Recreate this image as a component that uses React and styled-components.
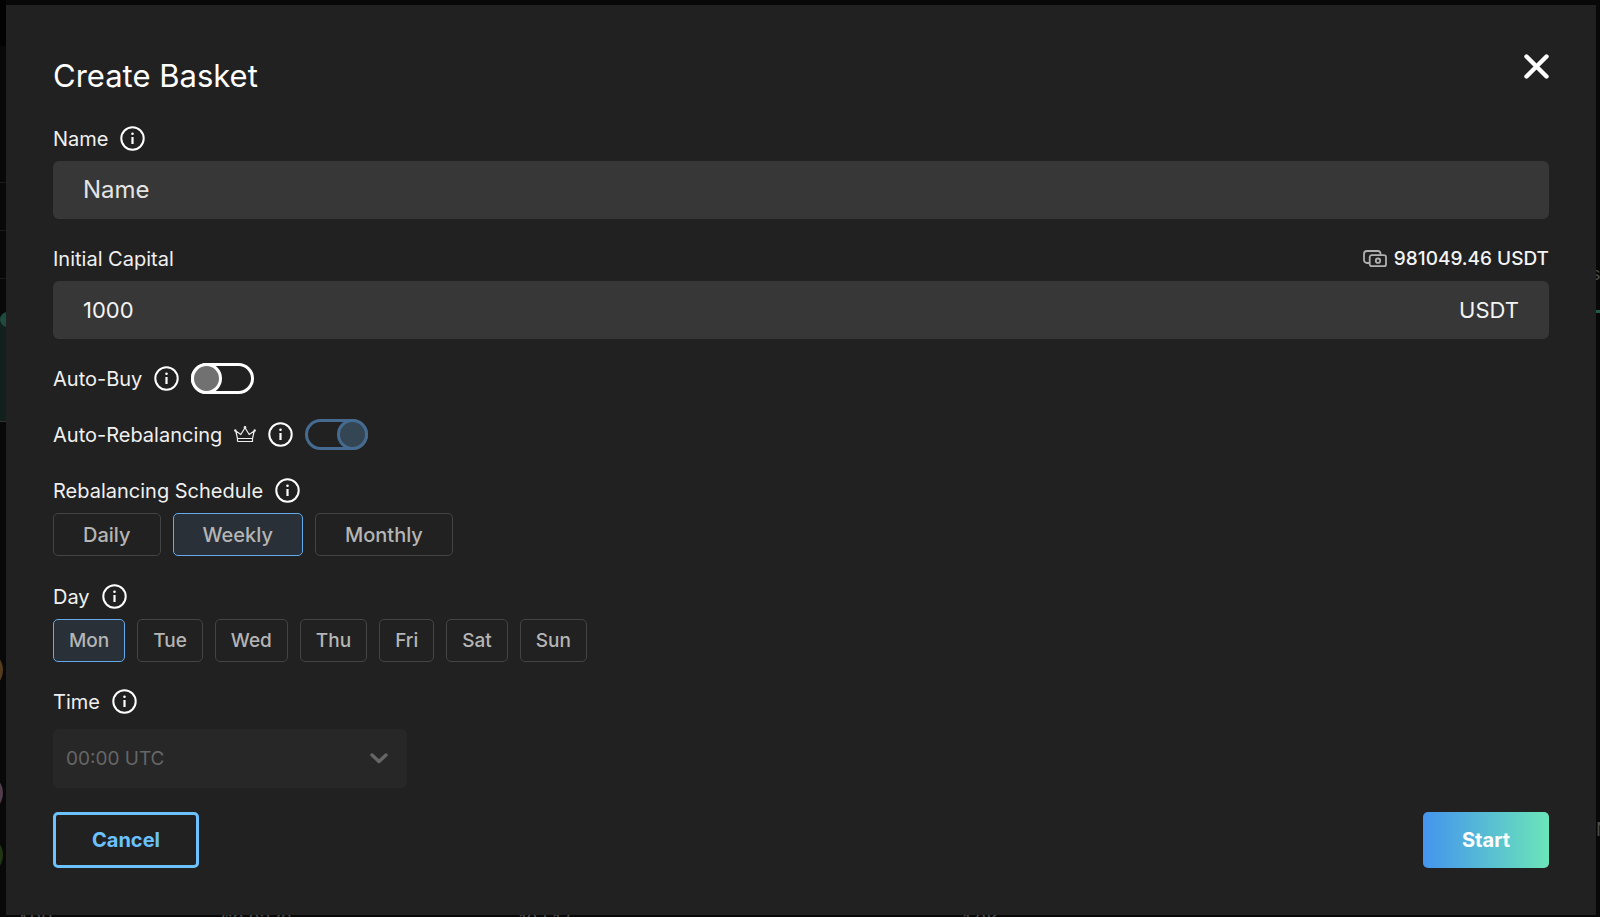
import React from "react";
import styled, { createGlobalStyle, css } from "styled-components";

const Global = createGlobalStyle`
  *, *::before { box-sizing: border-box; }
  body { margin: 0; background: #080808; color: #f4f4f4; font: 400 20px/30px Inter, "Open Sans", sans-serif; }
  button, input, select { font: inherit; color: inherit; }
  svg { display: block; flex: none; }
`;

const Page = styled.div`
  position: relative;
  min-height: 100vh;
  padding: 5px 4px 2px 6px;
  overflow: hidden;
`;

const Backdrop = styled.div`
  position: absolute;
  inset: 0;
  overflow: hidden;
`;

const Shape = styled.i`
  position: absolute;
  left: ${(p) => p.$x};
  top: ${(p) => p.$y}px;
  width: ${(p) => p.$w}px;
  height: ${(p) => p.$h}px;
  border-radius: ${(p) => p.$r || 0}px;
  background: ${(p) => p.$c};
`;

const Ghost = styled.span`
  position: absolute;
  left: ${(p) => p.$x};
  top: ${(p) => p.$y}px;
  color: #4c4c4c;
  font-size: 18px;
  line-height: 20px;
  white-space: nowrap;
`;

const Dialog = styled.form`
  position: relative;
  display: flex;
  flex-direction: column;
  min-height: calc(100vh - 7px);
  padding: 47px 47px 24px;
  background: #212121;
`;

const Header = styled.header`
  display: flex;
  justify-content: space-between;
  align-items: flex-start;
  margin-bottom: 26px;
`;

const Title = styled.h1`
  margin: 3px 0 0;
  font-size: 31px;
  line-height: 42px;
  font-weight: 400;
  color: #fff;
`;

const CloseButton = styled.button`
  padding: 2px 0;
  border: 0;
  background: none;
  color: #fff;
`;

const Field = styled.div`
  display: flex;
  flex-direction: column;
  gap: ${(p) => p.$gap || 7}px;
  margin-bottom: ${(p) => p.$after || 24}px;
`;

const LabelRow = styled.div`
  display: flex;
  align-items: center;
  gap: 12px;
  min-height: 31px;
`;

const Caption = styled.label`
  color: #f0f0f0;
`;

const IconButton = styled.button`
  padding: 0;
  border: 0;
  background: none;
  color: #fff;
`;

const Balance = styled.span`
  display: flex;
  align-items: center;
  gap: 7px;
  margin-left: auto;
  font-size: 19px;
  font-weight: 500;
`;

const InputBox = styled.div`
  display: flex;
  align-items: center;
  height: 58px;
  padding: 0 30px;
  border-radius: 6px;
  background: #373737;
  font-size: ${(p) => (p.$large ? 24 : 22)}px;
`;

const TextInput = styled.input`
  flex: 1;
  min-width: 0;
  padding: 0;
  border: 0;
  outline: 0;
  background: none;
  &::placeholder { color: #e4e4e4; opacity: 1; }
`;

const Switch = styled.input`
  appearance: none;
  display: flex;
  align-items: center;
  width: 63px;
  height: 31px;
  margin: 0;
  border: 3px solid #fff;
  border-radius: 16px;
  &::before {
    content: "";
    flex: none;
    width: 31px;
    height: 31px;
    margin: -3px;
    border: 3px solid #fff;
    border-radius: 50%;
    background: #717171;
  }
  &:checked { justify-content: flex-end; border-color: #456b90; }
  &:checked::before { border-color: #456b90; background: #344553; }
`;

const Chips = styled.div`
  display: flex;
  flex-wrap: wrap;
  gap: 12px;
`;

const Chip = styled.button`
  height: 43px;
  padding: 0 ${(p) => (p.$wide ? 29 : 15)}px;
  border: 1px solid #444;
  border-radius: 5px;
  background: transparent;
  color: #b5b5b5;
  font-size: ${(p) => (p.$wide ? 20 : 19)}px;
  font-weight: 500;
  ${(p) => p.$on && css`
    border-color: #64a9ea;
    background: #293037;
  `}
`;

const SelectBox = styled.div`
  display: grid;
  align-items: center;
  width: 354px;
  height: 59px;
  border-radius: 6px;
  background: #272727;
  color: #666;
  font-size: 19px;
  > * { grid-area: 1 / 1; }
  > svg { justify-self: end; margin-right: 19px; pointer-events: none; }
`;

const Select = styled.select`
  appearance: none;
  height: 100%;
  padding: 0 13px;
  border: 0;
  background: none;
  opacity: 1;
`;

const Footer = styled.footer`
  display: flex;
  justify-content: space-between;
`;

const Action = styled.button`
  height: 56px;
  padding: 0 36px;
  border: 3px solid #6bc2ff;
  border-radius: 5px;
  background: none;
  color: #6bc2ff;
  font-weight: 700;
  ${(p) => p.$primary && css`
    padding: 0 39px;
    border: 0;
    background: linear-gradient(90deg, #4494ee, #6be5b9);
    color: #fff;
  `}
`;

const InfoIcon = () => (
  <svg width="25" height="25" viewBox="0 0 25 25" fill="none" stroke="currentColor">
    <circle cx="12.5" cy="12.5" r="11.2" strokeWidth="2" />
    <path d="M12.5 11v7" strokeWidth="2.2" />
    <circle cx="12.5" cy="7.8" r="1.3" fill="currentColor" stroke="none" />
  </svg>
);

const CloseIcon = () => (
  <svg width="25" height="25" viewBox="0 0 25 25" fill="none" stroke="currentColor" strokeWidth="4.4" strokeLinecap="round">
    <path d="M2.5 2.5l20 20M22.5 2.5l-20 20" />
  </svg>
);

const NotesIcon = () => (
  <svg width="24" height="18" viewBox="0 0 24 18" fill="none" stroke="#b0b0b0" strokeWidth="1.8">
    <path d="M6.5 13H4a3 3 0 0 1-3-3V4a3 3 0 0 1 3-3h11a2.5 2.5 0 0 1 2.5 2.5V5" />
    <rect x="6.7" y="5.2" width="16.3" height="11" rx="2" />
    <circle cx="15" cy="10.7" r="2.2" />
  </svg>
);

const CrownIcon = () => (
  <svg width="22" height="17" viewBox="0 0 22 17" fill="none" stroke="#ededed" strokeWidth="1.2" strokeLinejoin="round">
    <path d="M3.5 12.5L1.8 5l5 3.5L11 1.8l4.2 6.7 5-3.5-1.7 7.5zM3.5 15.5h15v-3" />
    <path d="M3.5 12.5v3" />
    <circle cx="11" cy="1.5" r=".8" />
    <circle cx="1.3" cy="4.5" r=".6" />
    <circle cx="20.7" cy="4.5" r=".6" />
  </svg>
);

const ChevronIcon = () => (
  <svg width="18" height="11" viewBox="0 0 18 11" fill="none" stroke="currentColor" strokeWidth="3.4" strokeLinecap="round" strokeLinejoin="round">
    <path d="M2 2l7 6.5L16 2" />
  </svg>
);

const Info = ({ about }) => (
  <IconButton type="button" aria-label={`About ${about}`}><InfoIcon /></IconButton>
);

export default function App() {
  return (
    <Page>
      <Global />
      <Backdrop aria-hidden="true">
        <Shape $x="0" $y={0} $w={6} $h={46} $c="#020202" />
        <Shape $x="0" $y={182} $w={6} $h={1} $c="#191919" />
        <Shape $x="0" $y={230} $w={6} $h={1} $c="#191919" />
        <Shape $x="0" $y={278} $w={6} $h={1} $c="#191919" />
        <Shape $x="0" $y={320} $w={6} $h={101} $c="#11201d" />
        <Shape $x="0" $y={312} $w={15} $h={15} $r={8} $c="#1f4a41" />
        <Shape $x="0" $y={421} $w={6} $h={1} $c="#333" />
        <Shape $x="-37px" $y={650} $w={40} $h={40} $r={20} $c="#553a1c" />
        <Shape $x="-37px" $y={773} $w={40} $h={40} $r={20} $c="#513c4b" />
        <Shape $x="-37px" $y={835} $w={40} $h={40} $r={20} $c="#223512" />
        <Shape $x="calc(100% - 4px)" $y={310} $w={4} $h={3} $c="#1d5c4d" />
        <Ghost $x="calc(100% - 9px)" $y={264}>s</Ghost>
        <Ghost $x="calc(100% - 4px)" $y={820}>N</Ghost>
        <Ghost $x="17px" $y={911}>APP</Ghost>
        <Ghost $x="221px" $y={911}>$0.0376</Ghost>
        <Ghost $x="519px" $y={911}>10.517</Ghost>
        <Ghost $x="963px" $y={911}>1.0K</Ghost>
      </Backdrop>
      <Dialog onSubmit={(e) => e.preventDefault()}>
        <Header>
          <Title>Create Basket</Title>
          <CloseButton type="button" aria-label="Close"><CloseIcon /></CloseButton>
        </Header>

        <Field>
          <LabelRow><Caption htmlFor="name">Name</Caption><Info about="name" /></LabelRow>
          <InputBox $large><TextInput id="name" placeholder="Name" /></InputBox>
        </Field>

        <Field>
          <LabelRow>
            <Caption htmlFor="capital">Initial Capital</Caption>
            <Balance><NotesIcon />981049.46 USDT</Balance>
          </LabelRow>
          <InputBox><TextInput id="capital" defaultValue="1000" />USDT</InputBox>
        </Field>

        <Field $after={25}>
          <LabelRow>
            <Caption htmlFor="buy">Auto-Buy</Caption><Info about="auto-buy" />
            <Switch id="buy" type="checkbox" />
          </LabelRow>
        </Field>

        <Field $after={25}>
          <LabelRow>
            <Caption htmlFor="rebalance">Auto-Rebalancing</Caption><CrownIcon /><Info about="auto-rebalancing" />
            <Switch id="rebalance" type="checkbox" defaultChecked />
          </LabelRow>
        </Field>

        <Field $after={25}>
          <LabelRow><Caption as="span">Rebalancing Schedule</Caption><Info about="rebalancing schedule" /></LabelRow>
          <Chips>
            {["Daily", "Weekly", "Monthly"].map((t) => (
              <Chip key={t} type="button" $wide $on={t === "Weekly"} aria-pressed={t === "Weekly"}>{t}</Chip>
            ))}
          </Chips>
        </Field>

        <Field>
          <LabelRow><Caption as="span">Day</Caption><Info about="day" /></LabelRow>
          <Chips>
            {["Mon", "Tue", "Wed", "Thu", "Fri", "Sat", "Sun"].map((t) => (
              <Chip key={t} type="button" $on={t === "Mon"} aria-pressed={t === "Mon"}>{t}</Chip>
            ))}
          </Chips>
        </Field>

        <Field $gap={12}>
          <LabelRow><Caption htmlFor="time">Time</Caption><Info about="time" /></LabelRow>
          <SelectBox>
            <Select id="time" disabled><option>00:00 UTC</option></Select>
            <ChevronIcon />
          </SelectBox>
        </Field>

        <Footer>
          <Action type="button">Cancel</Action>
          <Action type="submit" $primary>Start</Action>
        </Footer>
      </Dialog>
    </Page>
  );
}
